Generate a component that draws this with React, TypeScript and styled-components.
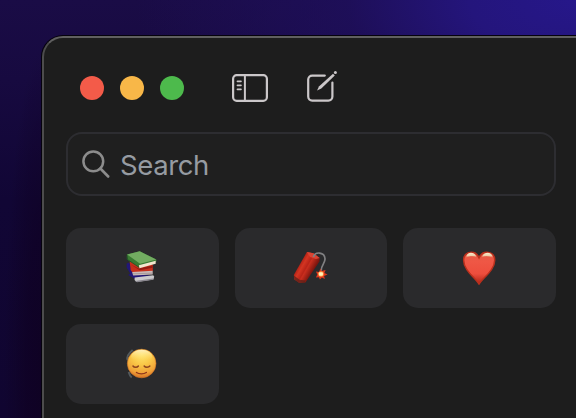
import React from 'react';
import styled, { createGlobalStyle } from 'styled-components';

const GlobalStyle = createGlobalStyle`
  * { box-sizing: border-box; }
  html, body { margin: 0; padding: 0; }
  body { font-family: Inter, "Liberation Sans", sans-serif; overflow: hidden; background: #12062f; }
`;

const Desktop = styled.main`
  width: 576px;
  height: 418px;
  overflow: hidden;
  padding: 36px 0 0 42px;
  background:
    radial-gradient(ellipse 38px 330px at 42px 380px, rgba(15, 0, 30, 0.7) 0, rgba(15, 0, 30, 0.5) 45%, transparent 100%),
    radial-gradient(ellipse 440px 230px at 576px 0, #26178a 0, #24157c 24%, rgba(32, 16, 98, 0.65) 52%, transparent 100%),
    linear-gradient(180deg, #1a0c46 0, #170a40 80px, #110635 200px, #100530 100%);
`;

const Window = styled.section`
  width: 600px;
  height: 460px;
  border: 2px solid #4c4c4c;
  border-top-color: #606060;
  border-radius: 21px;
  background: #1d1d1d;
  box-shadow: 0 0 0 1px #05020c;
  padding: 22px 0 0 22px;
`;

const Toolbar = styled.header`
  display: flex;
  align-items: center;
  height: 56px;
  padding-left: 14px;
`;

const TrafficLights = styled.div`
  display: flex;
  gap: 16px;
  margin-right: 47px;
`;

const Light = styled.span<{ $color: string }>`
  width: 24px;
  height: 24px;
  border-radius: 50%;
  background: ${({ $color }) => $color};
`;

const ToolButton = styled.button<{ $gap?: number }>`
  display: flex;
  padding: 0;
  border: 0;
  background: none;
  color: #cbc7c9;
  margin-right: ${({ $gap = 0 }) => $gap}px;
`;

const SearchField = styled.label`
  display: flex;
  align-items: center;
  width: 490px;
  height: 64px;
  margin-top: 16px;
  padding-left: 13px;
  border: 2px solid #2d2d31;
  border-radius: 16px;
  background: #1f1f1f;
  color: #8c8c8c;
`;

const SearchText = styled.span`
  margin: 1px 0 0 9px;
  color: #969ba2;
  font-size: 27.5px;
  line-height: 36px;
  letter-spacing: -0.4px;
`;

const EmojiGrid = styled.div`
  display: grid;
  grid-template-columns: repeat(3, 1fr);
  grid-auto-rows: 80px;
  gap: 16px;
  width: 490px;
  margin-top: 32px;
`;

const Tile = styled.button`
  display: flex;
  align-items: center;
  justify-content: center;
  padding: 0;
  border: 0;
  border-radius: 15px;
  background: #2a2a2c;
`;

const SidebarIcon = () => (
  <svg width="38" height="32" viewBox="231 72 38 32" fill="none" stroke="currentColor" strokeWidth="2.2">
    <rect x="233.1" y="75.1" width="33.8" height="25.8" rx="3.6" />
    <path d="M244.9 75v26" strokeWidth="2" />
    <path d="M237.4 81.4h3.6M237.4 85.4h3.6M237.4 89.4h3.6" strokeWidth="1.6" strokeLinecap="round" />
  </svg>
);

const ComposeIcon = () => (
  <svg width="34" height="36" viewBox="305 70 34 36" fill="none" stroke="currentColor" strokeWidth="2.2" strokeLinecap="round">
    <path d="M324.8 75.6h-12.6a4 4 0 0 0-4 4v17a4 4 0 0 0 4 4h16.2a4 4 0 0 0 4-4V82.6" />
    <path d="M333 73.8l1.8 1.8-13.5 13-4.2 1.8 1.8-4z" fill="currentColor" stroke="none" />
    <circle cx="335.4" cy="72.4" r="1.5" fill="currentColor" stroke="none" />
  </svg>
);

const MagnifierIcon = () => (
  <svg width="30" height="30" viewBox="81 149 30 30" fill="none" stroke="currentColor" strokeWidth="2.5">
    <circle cx="93.3" cy="161.3" r="9.9" />
    <path d="M100.4 168.5l7.8 8" strokeLinecap="round" strokeWidth="2.6" />
  </svg>
);

const Books = () => (
  <svg width="56" height="56" viewBox="-0.67 0 56 56">
    <path d="M12 23.5l2.5-1 5 12 16 1v2l-15 1.5-7-4 2-1.5-3.5-6z" fill="#221777" />
    <path d="M20 37.5l18.5-2.3 1 1.2-.7 3.2L21.8 42l-1.9-2z" fill="#cac9cc" />
    <path d="M20.5 41l18-2.5v1.2l-16 2.5z" fill="#89868e" />
    <path d="M15 21.5l23 3 .2 6.5-20 1.8-2.2-2.5z" fill="#c82e1b" />
    <path d="M16 24.5l8 4 14-3v2.3l-13 2.4z" fill="#951c12" />
    <path d="M17.5 32l20.5-1.2v3.6l-19.5 1z" fill="#c9b9b8" />
    <path d="M18 33.8l20-.7" stroke="#8d8588" strokeWidth=".6" />
    <path d="M12.2 14.5l12.8-3.3 16.7 8.3.1 2.1-16.6 6-12-7.8z" fill="#397b32" />
    <path d="M12.5 14.6L25 11.3l16.6 8.3-16.2 4.2z" fill="#72ac61" />
    <path d="M24.2 25.2l16.8-4.4v3l-16.3 4.4z" fill="#f2e6ce" />
    <path d="M12.5 15.5v3.8l12 8.1" fill="none" stroke="#235b28" />
  </svg>
);

const Firecracker = () => (
  <svg width="56" height="56" viewBox="-2.4 0 56 56">
    <defs>
      <linearGradient id="tube" x1="13" y1="24" x2="27" y2="32" gradientUnits="userSpaceOnUse">
        <stop stopColor="#a51b11" />
        <stop offset=".28" stopColor="#d43522" />
        <stop offset=".52" stopColor="#b92418" />
        <stop offset=".6" stopColor="#c92e1e" />
        <stop offset="1" stopColor="#7c150e" />
      </linearGradient>
    </defs>
    <path d="M21.5 12l6.5 1.2 6.3 4.8-.3 3.5L20 42.4l-6 .6-5-3.5-.6-4.5z" fill="url(#tube)" />
    <path d="M8.5 35.4l5.6 4.4 6.2.7-1.5 2.2-5 .2-4.7-3.4z" fill="#5c211a" opacity=".75" />
    <path d="M21.5 12l6.5 1.2 6.3 4.8-3.9 1.1-5.7-2z" fill="#db4433" />
    <path d="M28 17c1.6-6 11.2-5 11.6 1.7.3 4.4-4 6.5-3.8 12" fill="none" stroke="#808082" strokeWidth="1.7" />
    <path d="M34.9 28.4l1.3 2.7 4-1.2-1.2 3 3.2 1.7-3.5 1.3.8 3-3-1.3-2 1.8-1-2.2-3 .4 1.4-3-1.4-3.1 3.3.6z" fill="#de381d" />
    <circle cx="35.6" cy="34" r="2.8" fill="#ff963d" />
    <rect x="33.5" y="32.3" width="4" height="3.5" rx="1" fill="#fff4bb" />
  </svg>
);

const Heart = () => (
  <svg width="56" height="56" viewBox="0.67 0 56 56">
    <defs>
      <linearGradient id="heart" x1="0" y1="12" x2="0" y2="44" gradientUnits="userSpaceOnUse">
        <stop stopColor="#e35c45" />
        <stop offset=".3" stopColor="#ef5745" />
        <stop offset=".68" stopColor="#ed4e3d" />
        <stop offset="1" stopColor="#ae2416" />
      </linearGradient>
      <linearGradient id="gloss" x1="0" y1="12" x2="0" y2="19" gradientUnits="userSpaceOnUse">
        <stop stopColor="#fff6d8" />
        <stop offset=".5" stopColor="#eed0ac" />
        <stop offset="1" stopColor="#ef5745" stopOpacity="0" />
      </linearGradient>
    </defs>
    <path d="M27.7 44C23.5 37.5 12.3 30 12.3 20.3c0-9.2 11.7-11 15.4-2.4 3.7-8.6 15.7-6.8 15.7 2.4C43.4 30 32 37.5 27.7 44z" fill="url(#heart)" stroke="#ba301d" strokeWidth="1.5" />
    <path d="M14.8 17.8c.4-6.6 8.8-6.4 10.3-.6-3.2-1.4-7-1.2-10.3.6zM30.6 17.2c1.6-5.8 10.4-6 10.8.6-3.6-1.8-7.4-2-10.8-.6z" fill="url(#gloss)" />
  </svg>
);

const RelievedFace = () => (
  <svg width="56" height="56" viewBox="-0.67 0 56 56">
    <defs>
      <radialGradient id="face" cx="27" cy="18" r="24" gradientUnits="userSpaceOnUse">
        <stop stopColor="#ffe76f" />
        <stop offset=".45" stopColor="#f9c747" />
        <stop offset=".8" stopColor="#efa138" />
        <stop offset="1" stopColor="#d66f24" />
      </radialGradient>
      <linearGradient id="shine" x1="0" y1="13" x2="0" y2="24" gradientUnits="userSpaceOnUse">
        <stop stopColor="#fff2ca" />
        <stop offset="1" stopColor="#ffe271" stopOpacity="0" />
      </linearGradient>
    </defs>
    <path d="M18 14c-6 5-5.5 9-5.2 10M14 36c.8 3 1.8 4.4 3 5.4" fill="none" stroke="#53595c" strokeWidth="2" />
    <circle cx="27" cy="27.5" r="14.3" fill="url(#face)" stroke="#d67927" strokeWidth=".6" />
    <ellipse cx="27" cy="20.5" rx="10.5" ry="6.7" fill="url(#shine)" />
    <path d="M18.3 30c1.2 1.6 4.2 1.6 5.4 0M29.5 30c1.2 1.6 4.4 1.6 5.7 0" fill="none" stroke="#8d431d" strokeWidth="1.5" strokeLinecap="round" />
    <path d="M21.8 36.5c2.6 1.8 7.2 1.8 9.9 0" fill="none" stroke="#8d351c" strokeWidth="1.4" strokeLinecap="round" />
  </svg>
);

const lights = ['#f35b49', '#f8b748', '#4dba4c'];

export default function App() {
  return (
    <>
      <GlobalStyle />
      <Desktop>
        <Window>
          <Toolbar>
            <TrafficLights>
              {lights.map((color) => <Light key={color} $color={color} />)}
            </TrafficLights>
            <ToolButton $gap={36} aria-label="Toggle sidebar"><SidebarIcon /></ToolButton>
            <ToolButton aria-label="Compose"><ComposeIcon /></ToolButton>
          </Toolbar>
          <SearchField>
            <MagnifierIcon />
            <SearchText>Search</SearchText>
          </SearchField>
          <EmojiGrid>
            <Tile aria-label="Books"><Books /></Tile>
            <Tile aria-label="Firecracker"><Firecracker /></Tile>
            <Tile aria-label="Heart"><Heart /></Tile>
            <Tile aria-label="Relieved face"><RelievedFace /></Tile>
          </EmojiGrid>
        </Window>
      </Desktop>
    </>
  );
}
